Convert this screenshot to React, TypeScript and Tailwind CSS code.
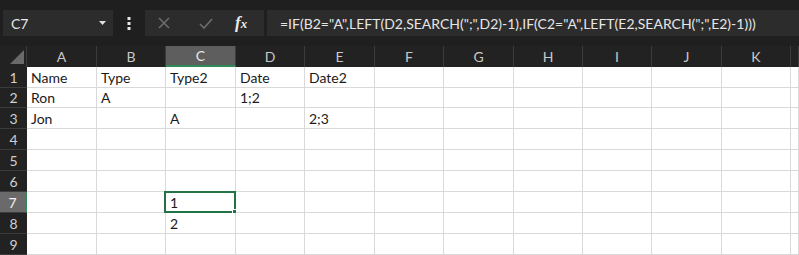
import React from "react";

const colWidths = [70, 69, 70, 69, 70, 69, 70, 69, 69, 70, 69, 8];
const colNames = ["A", "B", "C", "D", "E", "F", "G", "H", "I", "J", "K", "L"];
const rowHeights = [21, 20, 21, 21, 21, 21, 21, 21, 21];

const data: Record<string, string> = {
  A1: "Name",
  B1: "Type",
  C1: "Type2",
  D1: "Date",
  E1: "Date2",
  A2: "Ron",
  B2: "A",
  D2: "1;2",
  A3: "Jon",
  C3: "A",
  E3: "2;3",
  C7: "1",
  C8: "2",
};

const formula = '=IF(B2="A",LEFT(D2,SEARCH(";",D2)-1),IF(C2="A",LEFT(E2,SEARCH(";",E2)-1)))';

function FormulaBar() {
  return (
    <div className="flex h-[46px] items-start bg-[#1f1f1f] pt-[10px]">
      <div className="ml-[3px] flex h-[26px] w-[110px] items-center justify-between bg-[#2c2c2c] pl-[8px] pr-[7px] text-[14px] text-[#e6e6e6]">
        <span>C7</span>
        <svg width="7" height="4" viewBox="0 0 7 4">
          <path d="M0 0 L7 0 L3.5 4 Z" fill="#e0e0e0" />
        </svg>
      </div>
      <div className="flex h-[26px] w-[32px] items-center justify-center">
        <svg width="4" height="13" viewBox="0 0 4 13">
          <rect x="0.5" y="0" width="3" height="3" fill="#e6e6e6" />
          <rect x="0.5" y="5" width="3" height="3" fill="#e6e6e6" />
          <rect x="0.5" y="10" width="3" height="3" fill="#e6e6e6" />
        </svg>
      </div>
      <div className="flex h-[26px] w-[119px] items-center bg-[#2c2c2c]">
        <svg className="ml-[13px]" width="12" height="12" viewBox="0 0 12 12">
          <path d="M1 1 L11 11 M11 1 L1 11" stroke="#6c6c6c" strokeWidth="1.6" />
        </svg>
        <svg className="ml-[29px]" width="14" height="11" viewBox="0 0 14 11">
          <path d="M1 6 L5 10 L13 1" stroke="#6c6c6c" strokeWidth="1.7" fill="none" />
        </svg>
        <span className="ml-[22px] font-['Liberation_Serif'] text-[17px] italic font-bold text-[#eaeaea]">
          f<span className="text-[13px]">x</span>
        </span>
      </div>
      <div className="ml-[3px] flex h-[26px] flex-1 items-center bg-[#2c2c2c] pl-[13px] text-[14px] text-[#e6e6e6] whitespace-nowrap">
        {formula}
      </div>
    </div>
  );
}

function HeaderRow() {
  return (
    <div className="flex h-[21px] bg-[#222222]">
      <div className="relative w-[27px] shrink-0 border-r border-[#3c3c3c]">
        <svg className="absolute left-[10px] top-[4px]" width="14" height="14" viewBox="0 0 14 14">
          <path d="M14 0 L14 14 L0 14 Z" fill="#6a6a6a" />
        </svg>
      </div>
      {colNames.map((c, i) => (
        <div
          key={c}
          style={{ width: colWidths[i] }}
          className={
            c === "C"
              ? "flex shrink-0 items-center justify-center border-r border-[#3c3c3c] border-b-2 border-b-[#2f8a57] bg-[#5e5e5e] text-[14px] text-[#e8e8e8]"
              : "flex shrink-0 items-center justify-center border-r border-[#3c3c3c] text-[14px] text-[#c8c8c8]"
          }
        >
          {c === "L" ? "" : c}
        </div>
      ))}
    </div>
  );
}

function GridRow({ r, h }: { r: number; h: number }) {
  return (
    <div className="flex" style={{ height: h }}>
      <div
        className={
          r === 7
            ? "flex w-[27px] shrink-0 items-center justify-center border-b border-[#3c3c3c] border-r-2 border-r-[#2f8a57] bg-[#6a6a6a] text-[14px] text-[#f0f0f0]"
            : "flex w-[27px] shrink-0 items-center justify-center border-b border-[#3c3c3c] bg-[#222222] text-[14px] text-[#cfcfcf]"
        }
      >
        {r}
      </div>
      {colNames.map((c, i) => {
        const id = c + r;
        const selected = id === "C7";
        return (
          <div
            key={id}
            style={{ width: colWidths[i] }}
            className="relative flex shrink-0 items-center border-r border-b border-[#d9d9d9] bg-white pl-[4px] text-[14px] text-[#1a1a1a]"
          >
            {data[id] ?? ""}
            {selected && (
              <>
                <div className="absolute left-[-2px] top-[-1px] right-[-1px] bottom-[-1px] border-2 border-[#217346]" />
                <div className="absolute right-[-3px] bottom-[-3px] h-[5px] w-[5px] bg-[#217346] outline outline-1 outline-white" />
              </>
            )}
          </div>
        );
      })}
    </div>
  );
}

export default function App() {
  return (
    <div className="h-[255px] w-[799px] overflow-hidden bg-white font-['Lato','Liberation_Sans',sans-serif]">
      <FormulaBar />
      <HeaderRow />
      {rowHeights.map((h, i) => (
        <GridRow key={i} r={i + 1} h={h} />
      ))}
    </div>
  );
}
